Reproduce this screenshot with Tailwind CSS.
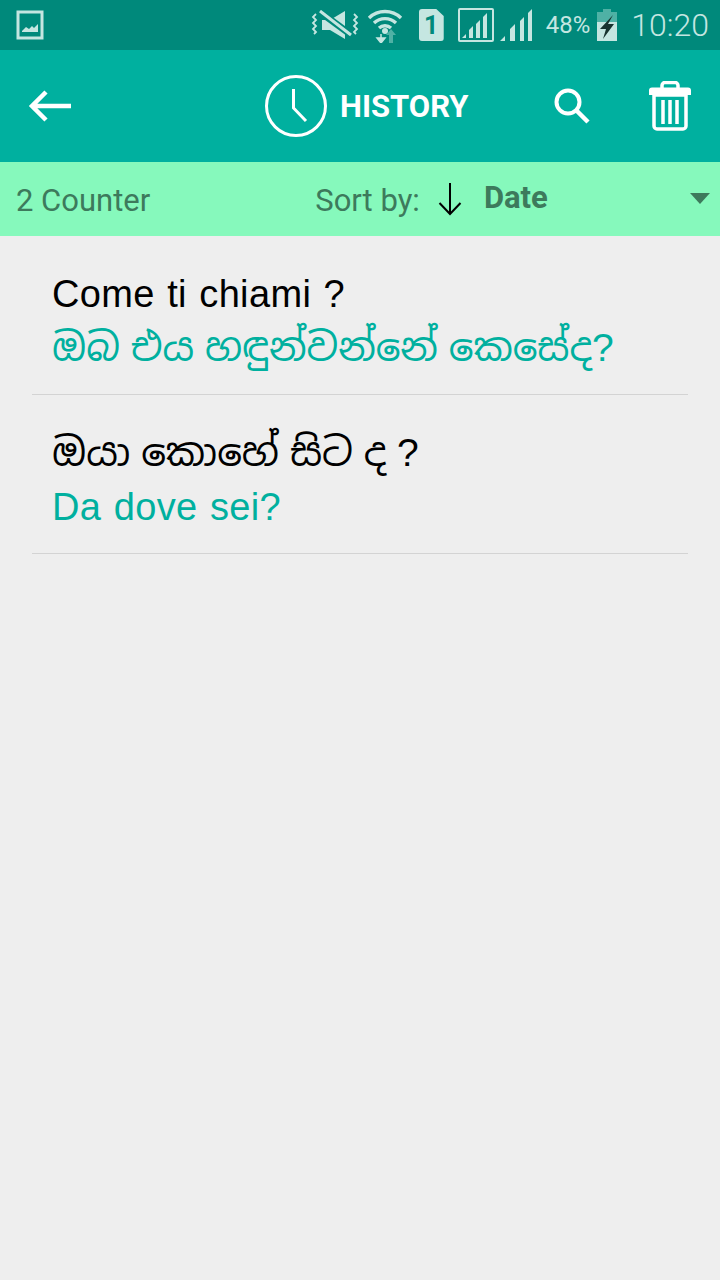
<!DOCTYPE html>
<html lang="en">
<head>
<meta charset="UTF-8">
<meta name="viewport" content="width=device-width, initial-scale=1.0">
<title>History</title>
<script src="https://cdn.jsdelivr.net/npm/@tailwindcss/browser@4"></script>
</head>
<body class="w-[720px] h-[1280px] overflow-hidden bg-[#eeeeee] font-['Roboto',sans-serif]">

<!-- status bar -->
<div class="h-[50px] bg-[#00897b] flex items-center pl-[16px] pr-[11px] text-[#c5e6e1]">
  <svg width="28" height="30" viewBox="0 0 28 30" fill="none">
    <rect x="2" y="2" width="24" height="26" fill="none" stroke="#c5e6e1" stroke-width="3"/>
    <path d="M6 21l4-4 3 2 3-3 2 2 4-4v8H6z" fill="#c5e6e1"/>
  </svg>
  <div class="ml-auto flex items-center">
    <svg width="48" height="30" viewBox="0 0 48 30" fill="none">
      <path d="M11 10h8l15-9v28l-15-9h-8z" fill="#c5e6e1"/>
      <path d="M9 2l30 22" stroke="#00897b" stroke-width="7"/>
      <path d="M9 1l31 24" stroke="#c5e6e1" stroke-width="3"/>
      <path d="M5 4L2 7l3 3-3 3 3 3-3 3 3 3-2 2M43 4l3 3-3 3 3 3-3 3 3 3-3 3 2 2" stroke="#c5e6e1" stroke-width="1.8"/>
    </svg>
    <svg class="ml-[8px]" width="36" height="36" viewBox="0 0 36 36" fill="none">
      <path d="M2 11a23 23 0 0 1 32 0M7 16a16 16 0 0 1 22 0M12 21a9 9 0 0 1 12 0" stroke="#c5e6e1" stroke-width="3.4"/>
      <circle cx="18" cy="24" r="3" fill="#c5e6e1"/>
      <path d="M14 27v4M14 36l-4-5h8z" stroke="#c5e6e1" fill="#c5e6e1" stroke-width="1.5"/>
      <path d="M22 36v-8h-3l5-6 5 6h-3v8z" fill="#4fb1a5"/>
    </svg>
    <div class="ml-[16px] w-[25px] h-[32px] bg-[#c5e6e1] rounded-[3px] [clip-path:polygon(0_0,70%_0,100%_22%,100%_100%,0_100%)] flex items-center justify-center text-[#00897b] text-[25px] font-bold leading-none">1</div>
    <div class="ml-[14px] w-[36px] h-[34px] border-2 border-[#c5e6e1] rounded-[2px] flex items-end justify-center">
      <svg width="30" height="28" viewBox="0 0 30 28"><path d="M1 26l4-4v4zM8 26v-8l4-4v12zM15 26V12l4-4v18zM22 26V5l4-4v25z" fill="#c5e6e1"/></svg>
    </div>
    <svg class="ml-[5px]" width="34" height="34" viewBox="0 0 34 34"><path d="M1 33l5-5v5zM11 33V21l5-5v17zM21 33V13l4-4v24zM29 33V5l4-4v32z" fill="#c5e6e1"/></svg>
    <span class="ml-[13px] text-[24px] leading-none">48%</span>
    <svg class="ml-[7px]" width="20" height="32" viewBox="0 0 20 32">
      <path d="M6 0h8v3h6v10H0V3h6z" fill="#4fb1a5"/>
      <path d="M0 13h20v19H0z" fill="#c5e6e1"/>
      <path d="M16 6L3 20h6l-3 10 11-15h-6z" fill="#17332f"/>
    </svg>
    <span class="ml-[14px] text-[32px] font-light leading-none">10:20</span>
  </div>
</div>

<!-- header -->
<div class="h-[112px] bg-[#00b09f] relative flex items-center text-white">
  <svg class="ml-[28px]" width="44" height="34" viewBox="0 0 44 34" fill="none">
    <path d="M43 17H4M18 3L4 17l14 14" stroke="#fff" stroke-width="4.5"/>
  </svg>
  <svg class="ml-[192px]" width="64" height="64" viewBox="0 0 64 64" fill="none">
    <circle cx="32" cy="32" r="29.5" stroke="#fff" stroke-width="3"/>
    <path d="M29.5 15v19l12.500 13" stroke="#fff" stroke-width="3"/>
  </svg>
  <span class="ml-[12px] text-[31px] font-bold leading-none">HISTORY</span>
  <svg class="ml-[85px]" width="36" height="36" viewBox="0 0 36 36" fill="none">
    <circle cx="14" cy="14" r="11.500" stroke="#fff" stroke-width="4"/>
    <path d="M22 22l12 12" stroke="#fff" stroke-width="4.500"/>
  </svg>
  <svg class="ml-[59px]" width="42" height="50" viewBox="0 0 42 50" fill="none">
    <path d="M13 7V4.500a3 3 0 0 1 3-3h10a3 3 0 0 1 3 3V7" stroke="#fff" stroke-width="3.500"/>
    <path d="M0 9.500a3 3 0 0 1 3-3h36a3 3 0 0 1 3 3V14H0z" fill="#fff"/>
    <path d="M5 14h32v31a3 3 0 0 1-3 3H8a3 3 0 0 1-3-3z" stroke="#fff" stroke-width="3.500"/>
    <path d="M14 19v24M21 19v24M28 19v24" stroke="#fff" stroke-width="3.500"/>
  </svg>
</div>

<!-- sort bar -->
<div class="h-[74px] bg-[#86f9bc] flex items-center text-[#3d7a5c]">
  <span class="ml-[16px] mt-[2px] text-[31px] leading-none">2 Counter</span>
  <span class="ml-[165px] mt-[2px] text-[31px] leading-none">Sort by:</span>
  <svg class="ml-[18px]" width="24" height="34" viewBox="0 0 24 34" fill="none">
    <path d="M12 1v31M1.500 21L12 32l10.500-11" stroke="#000" stroke-width="2"/>
  </svg>
  <span class="ml-[22px] text-[31px] font-bold leading-none -mt-[4px]">Date</span>
  <svg class="ml-auto mr-[10px] -mt-[2px]" width="20" height="11" viewBox="0 0 20 11"><path d="M0 0h20L10 11z" fill="#3d7a5c"/></svg>
</div>

<!-- history list -->
<div class="px-[32px] font-['Liberation_Sans','Noto_Sans_Sinhala','Noto_Sans',sans-serif]">
  <div class="h-[159px] border-b border-[#d3d3d3] pl-[20px] pt-[31px]">
    <div class="text-[38px] leading-[54px] tracking-[0.35px] [word-spacing:1.5px] text-black">Come ti chiami ?</div>
    <div class="text-[39px] leading-[54px] text-[#00b09f]">ඔබ එය හඳුන්වන්නේ කෙසේද?</div>
  </div>
  <div class="h-[159px] border-b border-[#d3d3d3] pl-[20px] pt-[31px]">
    <div class="text-[39px] leading-[54px] text-black">ඔයා කොහේ සිට ද ?</div>
    <div class="text-[38px] leading-[54px] tracking-[0.35px] [word-spacing:1.5px] text-[#00b09f]">Da dove sei?</div>
  </div>
</div>

</body>
</html>
